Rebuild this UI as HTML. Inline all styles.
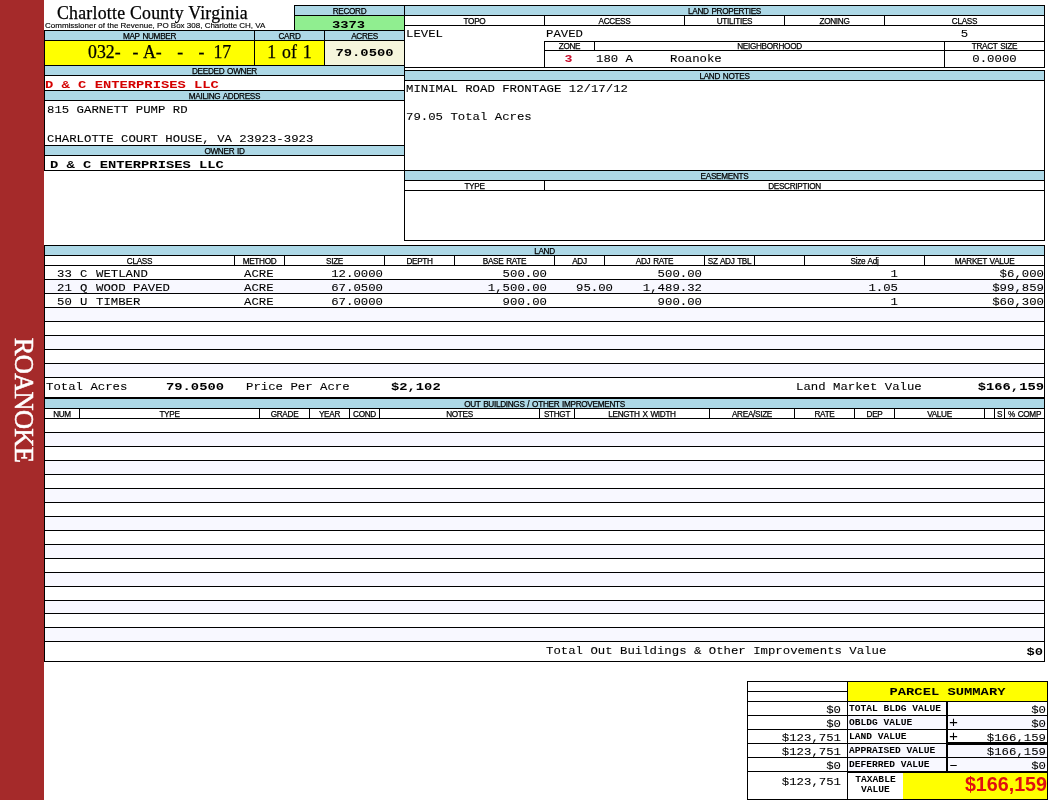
<!DOCTYPE html>
<html lang="en"><head><meta charset="utf-8"><title>Charlotte County Virginia - Property Card</title>
<style>
html,body{margin:0;padding:0;background:#fff;}
body{width:1050px;height:800px;position:relative;overflow:hidden;font-family:"Liberation Sans",sans-serif;color:#000;}
#page{position:absolute;left:0;top:0;width:1050px;height:800px;}
#ink2{position:absolute;left:0;top:0;width:1050px;height:800px;filter:saturate(1.001);}
#ink{position:absolute;left:0;top:0;width:1050px;height:800px;filter:grayscale(1);}
.r,.b,.k,.t{position:absolute;box-sizing:border-box;}
.b{border:1px solid #000;}
.k{background:#000;}
.t{white-space:pre;overflow:visible;}
.l{font-family:"Liberation Sans",sans-serif;font-size:8.2px;letter-spacing:-0.3px;word-spacing:0.8px;color:#000;-webkit-text-stroke:0.25px #000;}
.sub{font-family:"Liberation Sans",sans-serif;font-size:8px;-webkit-text-stroke:0.15px #000;}
.title{font-family:"Liberation Serif",serif;font-size:17.8px;letter-spacing:0.24px;-webkit-text-stroke:0.25px #000;}
.big{font-family:"Liberation Serif",serif;font-size:17.8px;-webkit-text-stroke:0.25px #000;}
.m{font-family:"Liberation Mono",monospace;font-size:12.33px;-webkit-text-stroke:0.1px #000;}
.n{font-family:"Liberation Mono",monospace;font-size:12.33px;-webkit-text-stroke:0.1px #000;}
.mb{font-family:"Liberation Mono",monospace;font-size:13.8px;font-weight:bold;}
.sb{font-family:"Liberation Mono",monospace;font-size:9.6px;font-weight:bold;}
.m3{font-family:"Liberation Mono",monospace;font-size:13.3px;font-weight:bold;}
.pl{font-family:"Liberation Mono",monospace;font-size:15px;}
.red{color:#d40000;}
.red2{color:#c8102e;}
.tax{font-family:"Liberation Sans",sans-serif;font-weight:bold;font-size:19.7px;color:#e01010;padding-right:0px;}
.side{font-family:"Liberation Serif",serif;font-size:26.5px;letter-spacing:-0.75px;color:#fff;-webkit-text-stroke:0.5px #fff;line-height:28px;height:28px;transform:translate(-50%,-50%) rotate(90deg);}
</style></head>
<body>
<div id="page">
<div class="r " style="left:0px;top:0px;width:44px;height:800px;background:#a52a2a"></div>
<div class="b" style="left:294px;top:5px;width:111px;height:26px;"></div>
<div class="r " style="left:295px;top:6px;width:109px;height:9px;background:#add8e6"></div>
<div class="k" style="left:295px;top:15px;width:109px;height:1px"></div>
<div class="r " style="left:295px;top:16px;width:109px;height:14px;background:#90ee90"></div>
<div class="b" style="left:44px;top:30px;width:361px;height:36px;"></div>
<div class="r " style="left:45px;top:31px;width:359px;height:9px;background:#add8e6"></div>
<div class="k" style="left:45px;top:40px;width:359px;height:1px"></div>
<div class="r " style="left:45px;top:41px;width:209px;height:24px;background:#ffff00"></div>
<div class="r " style="left:255px;top:41px;width:69px;height:24px;background:#ffff00"></div>
<div class="r " style="left:325px;top:41px;width:79px;height:24px;background:#f5f5dc"></div>
<div class="k" style="left:254px;top:31px;width:1px;height:34px"></div>
<div class="k" style="left:324px;top:31px;width:1px;height:34px"></div>
<div class="b" style="left:44px;top:65px;width:361px;height:26px;"></div>
<div class="r " style="left:45px;top:66px;width:359px;height:9px;background:#add8e6"></div>
<div class="k" style="left:45px;top:75px;width:359px;height:1px"></div>
<div class="b" style="left:44px;top:90px;width:361px;height:56px;"></div>
<div class="r " style="left:45px;top:91px;width:359px;height:9px;background:#add8e6"></div>
<div class="k" style="left:45px;top:100px;width:359px;height:1px"></div>
<div class="b" style="left:44px;top:145px;width:361px;height:26px;"></div>
<div class="r " style="left:45px;top:146px;width:359px;height:9px;background:#add8e6"></div>
<div class="k" style="left:45px;top:155px;width:359px;height:1px"></div>
<div class="b" style="left:404px;top:5px;width:641px;height:63px;"></div>
<div class="r " style="left:405px;top:6px;width:639px;height:9px;background:#add8e6"></div>
<div class="k" style="left:405px;top:15px;width:639px;height:1px"></div>
<div class="k" style="left:405px;top:25px;width:639px;height:1px"></div>
<div class="k" style="left:544px;top:16px;width:1px;height:9px"></div>
<div class="k" style="left:684px;top:16px;width:1px;height:9px"></div>
<div class="k" style="left:784px;top:16px;width:1px;height:9px"></div>
<div class="k" style="left:884px;top:16px;width:1px;height:9px"></div>
<div class="k" style="left:544px;top:41px;width:1px;height:26px"></div>
<div class="k" style="left:544px;top:41px;width:500px;height:1px"></div>
<div class="k" style="left:544px;top:50px;width:500px;height:1px"></div>
<div class="k" style="left:594px;top:42px;width:1px;height:8px"></div>
<div class="k" style="left:944px;top:42px;width:1px;height:25px"></div>
<div class="b" style="left:404px;top:70px;width:641px;height:101px;"></div>
<div class="r " style="left:405px;top:71px;width:639px;height:9px;background:#add8e6"></div>
<div class="k" style="left:405px;top:80px;width:639px;height:1px"></div>
<div class="b" style="left:404px;top:170px;width:641px;height:71px;"></div>
<div class="r " style="left:405px;top:171px;width:639px;height:9px;background:#add8e6"></div>
<div class="k" style="left:405px;top:180px;width:639px;height:1px"></div>
<div class="k" style="left:405px;top:190px;width:639px;height:1px"></div>
<div class="k" style="left:544px;top:181px;width:1px;height:9px"></div>
<div class="b" style="left:44px;top:245px;width:1001px;height:153px;"></div>
<div class="r " style="left:45px;top:246px;width:999px;height:9px;background:#add8e6"></div>
<div class="k" style="left:45px;top:255px;width:999px;height:1px"></div>
<div class="k" style="left:45px;top:265px;width:999px;height:1px"></div>
<div class="k" style="left:234px;top:256px;width:1px;height:9px"></div>
<div class="k" style="left:284px;top:256px;width:1px;height:9px"></div>
<div class="k" style="left:384px;top:256px;width:1px;height:9px"></div>
<div class="k" style="left:454px;top:256px;width:1px;height:9px"></div>
<div class="k" style="left:554px;top:256px;width:1px;height:9px"></div>
<div class="k" style="left:604px;top:256px;width:1px;height:9px"></div>
<div class="k" style="left:704px;top:256px;width:1px;height:9px"></div>
<div class="k" style="left:754px;top:256px;width:1px;height:9px"></div>
<div class="k" style="left:804px;top:256px;width:1px;height:9px"></div>
<div class="k" style="left:924px;top:256px;width:1px;height:9px"></div>
<div class="k" style="left:45px;top:279px;width:999px;height:1px"></div>
<div class="r " style="left:45px;top:280px;width:999px;height:13px;background:#f8f8ff"></div>
<div class="k" style="left:45px;top:293px;width:999px;height:1px"></div>
<div class="k" style="left:45px;top:307px;width:999px;height:1px"></div>
<div class="r " style="left:45px;top:308px;width:999px;height:13px;background:#f8f8ff"></div>
<div class="k" style="left:45px;top:321px;width:999px;height:1px"></div>
<div class="k" style="left:45px;top:335px;width:999px;height:1px"></div>
<div class="r " style="left:45px;top:336px;width:999px;height:13px;background:#f8f8ff"></div>
<div class="k" style="left:45px;top:349px;width:999px;height:1px"></div>
<div class="k" style="left:45px;top:363px;width:999px;height:1px"></div>
<div class="r " style="left:45px;top:364px;width:999px;height:13px;background:#f8f8ff"></div>
<div class="k" style="left:45px;top:377px;width:999px;height:1px"></div>
<div class="b" style="left:44px;top:398px;width:1001px;height:264px;"></div>
<div class="r " style="left:45px;top:399px;width:999px;height:9px;background:#add8e6"></div>
<div class="k" style="left:45px;top:408px;width:999px;height:1px"></div>
<div class="k" style="left:45px;top:418px;width:999px;height:1px"></div>
<div class="k" style="left:79px;top:409px;width:1px;height:9px"></div>
<div class="k" style="left:259px;top:409px;width:1px;height:9px"></div>
<div class="k" style="left:309px;top:409px;width:1px;height:9px"></div>
<div class="k" style="left:349px;top:409px;width:1px;height:9px"></div>
<div class="k" style="left:379px;top:409px;width:1px;height:9px"></div>
<div class="k" style="left:539px;top:409px;width:1px;height:9px"></div>
<div class="k" style="left:574px;top:409px;width:1px;height:9px"></div>
<div class="k" style="left:709px;top:409px;width:1px;height:9px"></div>
<div class="k" style="left:794px;top:409px;width:1px;height:9px"></div>
<div class="k" style="left:854px;top:409px;width:1px;height:9px"></div>
<div class="k" style="left:894px;top:409px;width:1px;height:9px"></div>
<div class="k" style="left:984px;top:409px;width:1px;height:9px"></div>
<div class="k" style="left:994px;top:409px;width:1px;height:9px"></div>
<div class="k" style="left:1004px;top:409px;width:1px;height:9px"></div>
<div class="k" style="left:45px;top:432px;width:999px;height:1px"></div>
<div class="r " style="left:45px;top:433px;width:999px;height:13px;background:#f8f8ff"></div>
<div class="k" style="left:45px;top:446px;width:999px;height:1px"></div>
<div class="k" style="left:45px;top:460px;width:999px;height:1px"></div>
<div class="r " style="left:45px;top:461px;width:999px;height:13px;background:#f8f8ff"></div>
<div class="k" style="left:45px;top:474px;width:999px;height:1px"></div>
<div class="k" style="left:45px;top:488px;width:999px;height:1px"></div>
<div class="r " style="left:45px;top:489px;width:999px;height:13px;background:#f8f8ff"></div>
<div class="k" style="left:45px;top:502px;width:999px;height:1px"></div>
<div class="k" style="left:45px;top:516px;width:999px;height:1px"></div>
<div class="r " style="left:45px;top:517px;width:999px;height:13px;background:#f8f8ff"></div>
<div class="k" style="left:45px;top:530px;width:999px;height:1px"></div>
<div class="k" style="left:45px;top:544px;width:999px;height:1px"></div>
<div class="r " style="left:45px;top:545px;width:999px;height:13px;background:#f8f8ff"></div>
<div class="k" style="left:45px;top:558px;width:999px;height:1px"></div>
<div class="k" style="left:45px;top:572px;width:999px;height:1px"></div>
<div class="r " style="left:45px;top:573px;width:999px;height:13px;background:#f8f8ff"></div>
<div class="k" style="left:45px;top:586px;width:999px;height:1px"></div>
<div class="k" style="left:45px;top:600px;width:999px;height:1px"></div>
<div class="r " style="left:45px;top:601px;width:999px;height:12px;background:#f8f8ff"></div>
<div class="k" style="left:45px;top:613px;width:999px;height:1px"></div>
<div class="k" style="left:45px;top:627px;width:999px;height:1px"></div>
<div class="r " style="left:45px;top:628px;width:999px;height:13px;background:#f8f8ff"></div>
<div class="k" style="left:45px;top:641px;width:999px;height:1px"></div>
<div class="b" style="left:747px;top:681px;width:301px;height:119px;"></div>
<div class="r " style="left:848px;top:682px;width:199px;height:19px;background:#ffff00"></div>
<div class="k" style="left:847px;top:682px;width:1px;height:117px"></div>
<div class="k" style="left:748px;top:691px;width:99px;height:1px"></div>
<div class="k" style="left:748px;top:701px;width:299px;height:1px"></div>
<div class="k" style="left:748px;top:715px;width:299px;height:1px"></div>
<div class="r " style="left:848px;top:716px;width:199px;height:13px;background:#f8f8ff"></div>
<div class="k" style="left:748px;top:729px;width:299px;height:1px"></div>
<div class="k" style="left:748px;top:743px;width:299px;height:1px"></div>
<div class="r " style="left:848px;top:744px;width:199px;height:13px;background:#f8f8ff"></div>
<div class="k" style="left:748px;top:757px;width:299px;height:1px"></div>
<div class="r " style="left:848px;top:758px;width:199px;height:13px;background:#f8f8ff"></div>
<div class="k" style="left:748px;top:771px;width:299px;height:1px"></div>
<div class="k" style="left:946px;top:702px;width:2px;height:70px"></div>
<div class="k" style="left:948px;top:742px;width:99px;height:3px"></div>
<div class="k" style="left:848px;top:771px;width:199px;height:2px"></div>
<div class="r " style="left:903px;top:773px;width:144px;height:26px;background:#ffff00"></div>
<div id="ink">
<div class="t side" style="left:23.5px;top:400px;">ROANOKE</div>
<div class="t title" style="left:57px;top:2px;width:244px;height:23px;line-height:23px;text-align:left;">Charlotte County Virginia</div>
<div class="t sub" style="left:45px;top:20px;width:256px;height:11px;line-height:11px;text-align:left;">Commissioner of the Revenue, PO Box 308, Charlotte CH, VA</div>
<div class="t l" style="left:295px;top:7px;width:109px;height:9px;line-height:9px;text-align:center;">RECORD</div>
<div class="t mb" style="left:294px;top:18px;width:109px;height:14px;line-height:14px;text-align:center;transform:scaleY(0.85);transform-origin:0 10.68px;">3373</div>
<div class="t l" style="left:45px;top:32px;width:209px;height:9px;line-height:9px;text-align:center;">MAP NUMBER</div>
<div class="t l" style="left:255px;top:32px;width:69px;height:9px;line-height:9px;text-align:center;">CARD</div>
<div class="t l" style="left:325px;top:32px;width:79px;height:9px;line-height:9px;text-align:center;">ACRES</div>
<div class="t big" style="left:88.0px;top:40px;height:24px;line-height:24px;">032-</div>
<div class="t big" style="left:132.4px;top:40px;height:24px;line-height:24px;">-</div>
<div class="t big" style="left:142.9px;top:40px;height:24px;line-height:24px;">A-</div>
<div class="t big" style="left:177.3px;top:40px;height:24px;line-height:24px;">-</div>
<div class="t big" style="left:198.4px;top:40px;height:24px;line-height:24px;">-</div>
<div class="t big" style="left:213.4px;top:40px;height:24px;line-height:24px;">17</div>
<div class="t big" style="left:255px;top:40px;width:69px;height:24px;line-height:24px;text-align:center;word-spacing:1.4px;">1 of 1</div>
<div class="t mb" style="left:325px;top:41px;width:79px;height:24px;line-height:24px;text-align:center;transform:scaleY(0.85);transform-origin:0 15.68px;">79.0500</div>
<div class="t l" style="left:45px;top:67px;width:359px;height:9px;line-height:9px;text-align:center;">DEEDED OWNER</div>
<div class="t l" style="left:45px;top:92px;width:359px;height:9px;line-height:9px;text-align:center;">MAILING ADDRESS</div>
<div class="t m" style="left:47px;top:103px;width:357px;height:14px;line-height:14px;text-align:left;transform:scaleY(0.87);transform-origin:0 10.28px;">815 GARNETT PUMP RD</div>
<div class="t m" style="left:47px;top:132px;width:357px;height:14px;line-height:14px;text-align:left;transform:scaleY(0.87);transform-origin:0 10.28px;">CHARLOTTE COURT HOUSE, VA 23923-3923</div>
<div class="t l" style="left:45px;top:147px;width:359px;height:9px;line-height:9px;text-align:center;">OWNER ID</div>
<div class="t mb" style="left:50px;top:158px;width:354px;height:14px;line-height:14px;text-align:left;transform:scaleY(0.85);transform-origin:0 10.68px;">D &amp; C ENTERPRISES LLC</div>
<div class="t l" style="left:405px;top:7px;width:639px;height:9px;line-height:9px;text-align:center;">LAND PROPERTIES</div>
<div class="t l" style="left:405px;top:17px;width:139px;height:9px;line-height:9px;text-align:center;">TOPO</div>
<div class="t l" style="left:545px;top:17px;width:139px;height:9px;line-height:9px;text-align:center;">ACCESS</div>
<div class="t l" style="left:685px;top:17px;width:99px;height:9px;line-height:9px;text-align:center;">UTILITIES</div>
<div class="t l" style="left:785px;top:17px;width:99px;height:9px;line-height:9px;text-align:center;">ZONING</div>
<div class="t l" style="left:885px;top:17px;width:159px;height:9px;line-height:9px;text-align:center;">CLASS</div>
<div class="t m" style="left:406px;top:27px;width:138px;height:14px;line-height:14px;text-align:left;transform:scaleY(0.87);transform-origin:0 10.28px;">LEVEL</div>
<div class="t m" style="left:546px;top:27px;width:138px;height:14px;line-height:14px;text-align:left;transform:scaleY(0.87);transform-origin:0 10.28px;">PAVED</div>
<div class="t n" style="left:885px;top:27px;width:159px;height:14px;line-height:14px;text-align:center;transform:scaleY(0.87);transform-origin:0 10.28px;">5</div>
<div class="t l" style="left:545px;top:43px;width:49px;height:8px;line-height:8px;text-align:center;">ZONE</div>
<div class="t l" style="left:595px;top:43px;width:349px;height:8px;line-height:8px;text-align:center;">NEIGHBORHOOD</div>
<div class="t l" style="left:945px;top:43px;width:99px;height:8px;line-height:8px;text-align:center;">TRACT SIZE</div>
<div class="t m" style="left:596px;top:51px;width:348px;height:16px;line-height:16px;text-align:left;transform:scaleY(0.87);transform-origin:0 11.28px;">180 A     Roanoke</div>
<div class="t n" style="left:945px;top:51px;width:99px;height:16px;line-height:16px;text-align:center;transform:scaleY(0.87);transform-origin:0 11.28px;">0.0000</div>
<div class="t l" style="left:405px;top:72px;width:639px;height:9px;line-height:9px;text-align:center;">LAND NOTES</div>
<div class="t m" style="left:406px;top:82px;width:638px;height:14px;line-height:14px;text-align:left;transform:scaleY(0.87);transform-origin:0 10.28px;">MINIMAL ROAD FRONTAGE 12/17/12</div>
<div class="t m" style="left:406px;top:110px;width:638px;height:14px;line-height:14px;text-align:left;transform:scaleY(0.87);transform-origin:0 10.28px;">79.05 Total Acres</div>
<div class="t l" style="left:405px;top:172px;width:639px;height:9px;line-height:9px;text-align:center;">EASEMENTS</div>
<div class="t l" style="left:405px;top:182px;width:139px;height:9px;line-height:9px;text-align:center;">TYPE</div>
<div class="t l" style="left:545px;top:182px;width:499px;height:9px;line-height:9px;text-align:center;">DESCRIPTION</div>
<div class="t l" style="left:45px;top:247px;width:999px;height:9px;line-height:9px;text-align:center;">LAND</div>
<div class="t l" style="left:45px;top:257px;width:189px;height:9px;line-height:9px;text-align:center;">CLASS</div>
<div class="t l" style="left:235px;top:257px;width:49px;height:9px;line-height:9px;text-align:center;">METHOD</div>
<div class="t l" style="left:285px;top:257px;width:99px;height:9px;line-height:9px;text-align:center;">SIZE</div>
<div class="t l" style="left:385px;top:257px;width:69px;height:9px;line-height:9px;text-align:center;">DEPTH</div>
<div class="t l" style="left:455px;top:257px;width:99px;height:9px;line-height:9px;text-align:center;">BASE RATE</div>
<div class="t l" style="left:555px;top:257px;width:49px;height:9px;line-height:9px;text-align:center;">ADJ</div>
<div class="t l" style="left:605px;top:257px;width:99px;height:9px;line-height:9px;text-align:center;">ADJ RATE</div>
<div class="t l" style="left:705px;top:257px;width:49px;height:9px;line-height:9px;text-align:center;">SZ ADJ TBL</div>
<div class="t l" style="left:805px;top:257px;width:119px;height:9px;line-height:9px;text-align:center;">Size Adj</div>
<div class="t l" style="left:925px;top:257px;width:119px;height:9px;line-height:9px;text-align:center;">MARKET VALUE</div>
<div class="t m" style="left:57px;top:267px;width:177px;height:14px;line-height:14px;text-align:left;transform:scaleY(0.87);transform-origin:0 10.28px;">33</div>
<div class="t m" style="left:80px;top:267px;width:154px;height:14px;line-height:14px;text-align:left;transform:scaleY(0.87);transform-origin:0 10.28px;">C</div>
<div class="t m" style="left:96px;top:267px;width:138px;height:14px;line-height:14px;text-align:left;transform:scaleY(0.87);transform-origin:0 10.28px;">WETLAND</div>
<div class="t m" style="left:244px;top:267px;width:57px;height:14px;line-height:14px;text-align:left;transform:scaleY(0.87);transform-origin:0 10.28px;">ACRE</div>
<div class="t n" style="left:284px;top:267px;width:99px;height:14px;line-height:14px;text-align:right;transform:scaleY(0.87);transform-origin:0 10.28px;">12.0000</div>
<div class="t n" style="left:454px;top:267px;width:93px;height:14px;line-height:14px;text-align:right;transform:scaleY(0.87);transform-origin:0 10.28px;">500.00</div>
<div class="t n" style="left:554px;top:267px;width:59px;height:14px;line-height:14px;text-align:right;transform:scaleY(0.87);transform-origin:0 10.28px;"></div>
<div class="t n" style="left:604px;top:267px;width:98px;height:14px;line-height:14px;text-align:right;transform:scaleY(0.87);transform-origin:0 10.28px;">500.00</div>
<div class="t n" style="left:804px;top:267px;width:94px;height:14px;line-height:14px;text-align:right;transform:scaleY(0.87);transform-origin:0 10.28px;">1</div>
<div class="t n" style="left:924px;top:267px;width:120px;height:14px;line-height:14px;text-align:right;transform:scaleY(0.87);transform-origin:0 10.28px;">$6,000</div>
<div class="t m" style="left:57px;top:281px;width:177px;height:14px;line-height:14px;text-align:left;transform:scaleY(0.87);transform-origin:0 10.28px;">21</div>
<div class="t m" style="left:80px;top:281px;width:154px;height:14px;line-height:14px;text-align:left;transform:scaleY(0.87);transform-origin:0 10.28px;">Q</div>
<div class="t m" style="left:96px;top:281px;width:138px;height:14px;line-height:14px;text-align:left;transform:scaleY(0.87);transform-origin:0 10.28px;">WOOD PAVED</div>
<div class="t m" style="left:244px;top:281px;width:57px;height:14px;line-height:14px;text-align:left;transform:scaleY(0.87);transform-origin:0 10.28px;">ACRE</div>
<div class="t n" style="left:284px;top:281px;width:99px;height:14px;line-height:14px;text-align:right;transform:scaleY(0.87);transform-origin:0 10.28px;">67.0500</div>
<div class="t n" style="left:454px;top:281px;width:93px;height:14px;line-height:14px;text-align:right;transform:scaleY(0.87);transform-origin:0 10.28px;">1,500.00</div>
<div class="t n" style="left:554px;top:281px;width:59px;height:14px;line-height:14px;text-align:right;transform:scaleY(0.87);transform-origin:0 10.28px;">95.00</div>
<div class="t n" style="left:604px;top:281px;width:98px;height:14px;line-height:14px;text-align:right;transform:scaleY(0.87);transform-origin:0 10.28px;">1,489.32</div>
<div class="t n" style="left:804px;top:281px;width:94px;height:14px;line-height:14px;text-align:right;transform:scaleY(0.87);transform-origin:0 10.28px;">1.05</div>
<div class="t n" style="left:924px;top:281px;width:120px;height:14px;line-height:14px;text-align:right;transform:scaleY(0.87);transform-origin:0 10.28px;">$99,859</div>
<div class="t m" style="left:57px;top:295px;width:177px;height:14px;line-height:14px;text-align:left;transform:scaleY(0.87);transform-origin:0 10.28px;">50</div>
<div class="t m" style="left:80px;top:295px;width:154px;height:14px;line-height:14px;text-align:left;transform:scaleY(0.87);transform-origin:0 10.28px;">U</div>
<div class="t m" style="left:96px;top:295px;width:138px;height:14px;line-height:14px;text-align:left;transform:scaleY(0.87);transform-origin:0 10.28px;">TIMBER</div>
<div class="t m" style="left:244px;top:295px;width:57px;height:14px;line-height:14px;text-align:left;transform:scaleY(0.87);transform-origin:0 10.28px;">ACRE</div>
<div class="t n" style="left:284px;top:295px;width:99px;height:14px;line-height:14px;text-align:right;transform:scaleY(0.87);transform-origin:0 10.28px;">67.0000</div>
<div class="t n" style="left:454px;top:295px;width:93px;height:14px;line-height:14px;text-align:right;transform:scaleY(0.87);transform-origin:0 10.28px;">900.00</div>
<div class="t n" style="left:554px;top:295px;width:59px;height:14px;line-height:14px;text-align:right;transform:scaleY(0.87);transform-origin:0 10.28px;"></div>
<div class="t n" style="left:604px;top:295px;width:98px;height:14px;line-height:14px;text-align:right;transform:scaleY(0.87);transform-origin:0 10.28px;">900.00</div>
<div class="t n" style="left:804px;top:295px;width:94px;height:14px;line-height:14px;text-align:right;transform:scaleY(0.87);transform-origin:0 10.28px;">1</div>
<div class="t n" style="left:924px;top:295px;width:120px;height:14px;line-height:14px;text-align:right;transform:scaleY(0.87);transform-origin:0 10.28px;">$60,300</div>
<div class="t m" style="left:46px;top:378px;width:155px;height:19px;line-height:19px;text-align:left;transform:scaleY(0.87);transform-origin:0 12.78px;">Total Acres</div>
<div class="t mb" style="left:150px;top:377px;width:74px;height:19px;line-height:19px;text-align:right;transform:scaleY(0.85);transform-origin:0 13.18px;">79.0500</div>
<div class="t m" style="left:246px;top:378px;width:155px;height:19px;line-height:19px;text-align:left;transform:scaleY(0.87);transform-origin:0 12.78px;">Price Per Acre</div>
<div class="t mb" style="left:391px;top:377px;width:80px;height:19px;line-height:19px;text-align:left;transform:scaleY(0.85);transform-origin:0 13.18px;">$2,102</div>
<div class="t m" style="left:796px;top:378px;width:165px;height:19px;line-height:19px;text-align:left;transform:scaleY(0.87);transform-origin:0 12.78px;">Land Market Value</div>
<div class="t mb" style="left:900px;top:377px;width:144px;height:19px;line-height:19px;text-align:right;transform:scaleY(0.85);transform-origin:0 13.18px;">$166,159</div>
<div class="t l" style="left:45px;top:400px;width:999px;height:9px;line-height:9px;text-align:center;">OUT BUILDINGS / OTHER IMPROVEMENTS</div>
<div class="t l" style="left:45px;top:410px;width:34px;height:9px;line-height:9px;text-align:center;">NUM</div>
<div class="t l" style="left:80px;top:410px;width:179px;height:9px;line-height:9px;text-align:center;">TYPE</div>
<div class="t l" style="left:260px;top:410px;width:49px;height:9px;line-height:9px;text-align:center;">GRADE</div>
<div class="t l" style="left:310px;top:410px;width:39px;height:9px;line-height:9px;text-align:center;">YEAR</div>
<div class="t l" style="left:350px;top:410px;width:29px;height:9px;line-height:9px;text-align:center;">COND</div>
<div class="t l" style="left:380px;top:410px;width:159px;height:9px;line-height:9px;text-align:center;">NOTES</div>
<div class="t l" style="left:540px;top:410px;width:34px;height:9px;line-height:9px;text-align:center;">STHGT</div>
<div class="t l" style="left:575px;top:410px;width:134px;height:9px;line-height:9px;text-align:center;">LENGTH X WIDTH</div>
<div class="t l" style="left:710px;top:410px;width:84px;height:9px;line-height:9px;text-align:center;">AREA/SIZE</div>
<div class="t l" style="left:795px;top:410px;width:59px;height:9px;line-height:9px;text-align:center;">RATE</div>
<div class="t l" style="left:855px;top:410px;width:39px;height:9px;line-height:9px;text-align:center;">DEP</div>
<div class="t l" style="left:895px;top:410px;width:89px;height:9px;line-height:9px;text-align:center;">VALUE</div>
<div class="t l" style="left:995px;top:410px;width:9px;height:9px;line-height:9px;text-align:center;">S</div>
<div class="t l" style="left:1005px;top:410px;width:39px;height:9px;line-height:9px;text-align:center;">% COMP</div>
<div class="t m" style="left:546px;top:642px;width:355px;height:19px;line-height:19px;text-align:left;transform:scaleY(0.87);transform-origin:0 12.78px;">Total Out Buildings &amp; Other Improvements Value</div>
<div class="t mb" style="left:950px;top:642px;width:93px;height:19px;line-height:19px;text-align:right;transform:scaleY(0.85);transform-origin:0 13.18px;">$0</div>
<div class="t mb" style="left:848px;top:682px;width:199px;height:19px;line-height:19px;text-align:center;transform:scaleY(0.85);transform-origin:0 13.18px;">PARCEL SUMMARY</div>
<div class="t n" style="left:748px;top:703px;width:93px;height:14px;line-height:14px;text-align:right;transform:scaleY(0.87);transform-origin:0 10.28px;">$0</div>
<div class="t sb" style="left:849px;top:702px;width:98px;height:13px;line-height:13px;text-align:left;transform:scaleY(0.87);transform-origin:0 9.06px;">TOTAL BLDG VALUE</div>
<div class="t n" style="left:948px;top:703px;width:98px;height:14px;line-height:14px;text-align:right;transform:scaleY(0.87);transform-origin:0 10.28px;">$0</div>
<div class="t n" style="left:748px;top:717px;width:93px;height:14px;line-height:14px;text-align:right;transform:scaleY(0.87);transform-origin:0 10.28px;">$0</div>
<div class="t sb" style="left:849px;top:716px;width:98px;height:13px;line-height:13px;text-align:left;transform:scaleY(0.87);transform-origin:0 9.06px;">OBLDG VALUE</div>
<div class="t n" style="left:948px;top:717px;width:98px;height:14px;line-height:14px;text-align:right;transform:scaleY(0.87);transform-origin:0 10.28px;">$0</div>
<div class="t pl" style="left:948px;top:717px;width:11px;height:14px;line-height:14px;text-align:center;">+</div>
<div class="t n" style="left:748px;top:731px;width:93px;height:14px;line-height:14px;text-align:right;transform:scaleY(0.87);transform-origin:0 10.28px;">$123,751</div>
<div class="t sb" style="left:849px;top:730px;width:98px;height:13px;line-height:13px;text-align:left;transform:scaleY(0.87);transform-origin:0 9.06px;">LAND VALUE</div>
<div class="t n" style="left:948px;top:731px;width:98px;height:14px;line-height:14px;text-align:right;transform:scaleY(0.87);transform-origin:0 10.28px;">$166,159</div>
<div class="t pl" style="left:948px;top:731px;width:11px;height:14px;line-height:14px;text-align:center;">+</div>
<div class="t n" style="left:748px;top:745px;width:93px;height:14px;line-height:14px;text-align:right;transform:scaleY(0.87);transform-origin:0 10.28px;">$123,751</div>
<div class="t sb" style="left:849px;top:744px;width:98px;height:13px;line-height:13px;text-align:left;transform:scaleY(0.87);transform-origin:0 9.06px;">APPRAISED VALUE</div>
<div class="t n" style="left:948px;top:745px;width:98px;height:14px;line-height:14px;text-align:right;transform:scaleY(0.87);transform-origin:0 10.28px;">$166,159</div>
<div class="t n" style="left:748px;top:759px;width:93px;height:14px;line-height:14px;text-align:right;transform:scaleY(0.87);transform-origin:0 10.28px;">$0</div>
<div class="t sb" style="left:849px;top:758px;width:98px;height:13px;line-height:13px;text-align:left;transform:scaleY(0.87);transform-origin:0 9.06px;">DEFERRED VALUE</div>
<div class="t n" style="left:948px;top:759px;width:98px;height:14px;line-height:14px;text-align:right;transform:scaleY(0.87);transform-origin:0 10.28px;">$0</div>
<div class="t pl" style="left:948px;top:759px;width:11px;height:14px;line-height:14px;text-align:center;">–</div>
<div class="t n" style="left:748px;top:772px;width:93px;height:21px;line-height:21px;text-align:right;transform:scaleY(0.87);transform-origin:0 13.78px;">$123,751</div>
<div class="t sb" style="left:848px;top:774px;width:55px;height:12px;line-height:12px;text-align:center;transform:scaleY(0.87);transform-origin:0 8.56px;">TAXABLE</div>
<div class="t sb" style="left:848px;top:784px;width:55px;height:12px;line-height:12px;text-align:center;transform:scaleY(0.87);transform-origin:0 8.56px;">VALUE</div>
</div>
<div id="ink2">
<div class="t mb red" style="left:45px;top:78px;width:359px;height:14px;line-height:14px;text-align:left;transform:scaleY(0.85);transform-origin:0 10.68px;">D &amp; C ENTERPRISES LLC</div>
<div class="t m3 red2" style="left:544px;top:51px;width:49px;height:16px;line-height:16px;text-align:center;transform:scaleY(0.84);transform-origin:0 11.54px;">3</div>
<div class="t tax" style="left:903px;top:771px;width:144px;height:26px;line-height:26px;text-align:right;">$166,159</div>
</div>
</div>
</body></html>
